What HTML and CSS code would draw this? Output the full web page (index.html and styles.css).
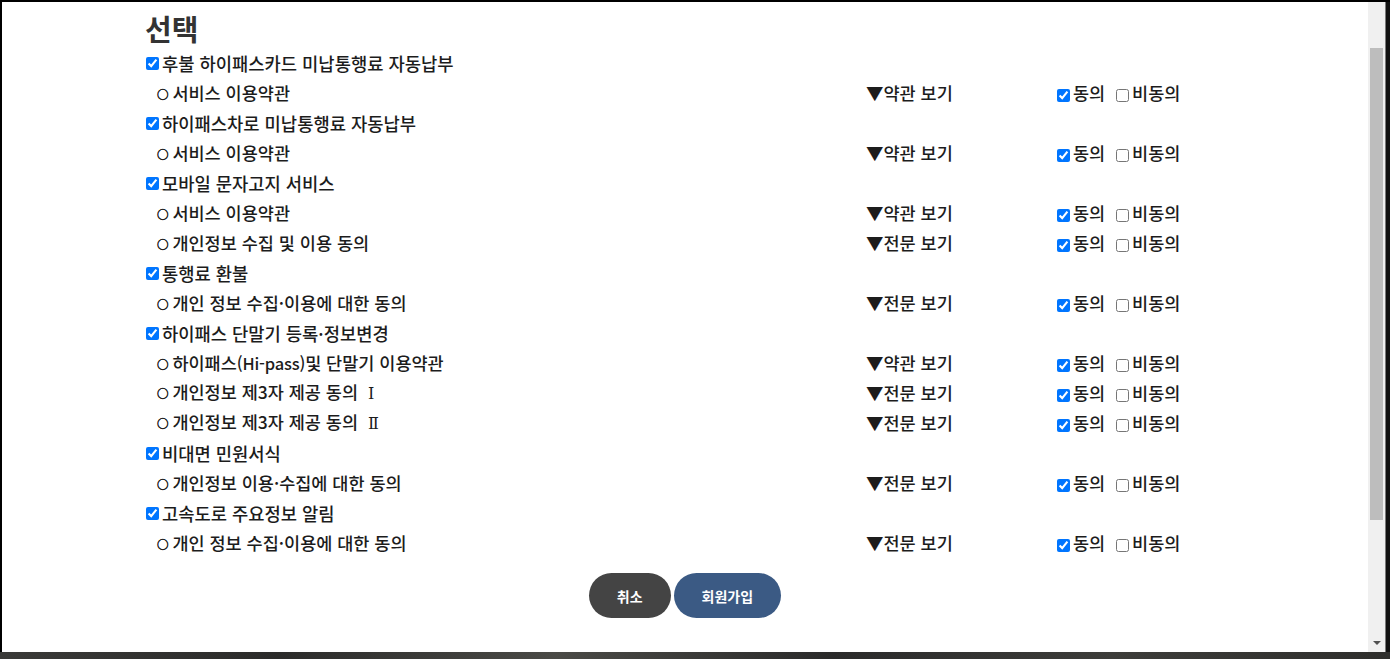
FILE: index.html
```html
<!DOCTYPE html>
<html lang="ko">
<head>
<meta charset="utf-8">
<title>선택 약관 동의</title>
<link rel="stylesheet" href="styles.css">
</head>
<body>
<div class="screen">
  <div class="window">
    <main class="page">
      <section class="terms">
        <h2 class="title">선택</h2>
        <div class="list">
          <div class="group"><label><input type="checkbox" checked>후불 하이패스카드 미납통행료 자동납부</label></div>
          <div class="item"><span class="name"><span class="bullet">○</span> 서비스 이용약관</span><span class="view">▼약관 보기</span><span class="agree"><input type="checkbox" checked>동의 <input class="no" type="checkbox">비동의</span></div>

          <div class="group"><label><input type="checkbox" checked>하이패스차로 미납통행료 자동납부</label></div>
          <div class="item"><span class="name"><span class="bullet">○</span> 서비스 이용약관</span><span class="view">▼약관 보기</span><span class="agree"><input type="checkbox" checked>동의 <input class="no" type="checkbox">비동의</span></div>

          <div class="group"><label><input type="checkbox" checked>모바일 문자고지 서비스</label></div>
          <div class="item"><span class="name"><span class="bullet">○</span> 서비스 이용약관</span><span class="view">▼약관 보기</span><span class="agree"><input type="checkbox" checked>동의 <input class="no" type="checkbox">비동의</span></div>
          <div class="item"><span class="name"><span class="bullet">○</span> 개인정보 수집 및 이용 동의</span><span class="view">▼전문 보기</span><span class="agree"><input type="checkbox" checked>동의 <input class="no" type="checkbox">비동의</span></div>

          <div class="group"><label><input type="checkbox" checked>통행료 환불</label></div>
          <div class="item"><span class="name"><span class="bullet">○</span> 개인 정보 수집·이용에 대한 동의</span><span class="view">▼전문 보기</span><span class="agree"><input type="checkbox" checked>동의 <input class="no" type="checkbox">비동의</span></div>

          <div class="group"><label><input type="checkbox" checked>하이패스 단말기 등록·정보변경</label></div>
          <div class="item"><span class="name"><span class="bullet">○</span> 하이패스<span class="latin">(Hi-pass)</span>및 단말기 이용약관</span><span class="view">▼약관 보기</span><span class="agree"><input type="checkbox" checked>동의 <input class="no" type="checkbox">비동의</span></div>
          <div class="item"><span class="name"><span class="bullet">○</span> 개인정보 제3자 제공 동의 <span class="roman">Ⅰ</span></span><span class="view">▼전문 보기</span><span class="agree"><input type="checkbox" checked>동의 <input class="no" type="checkbox">비동의</span></div>
          <div class="item"><span class="name"><span class="bullet">○</span> 개인정보 제3자 제공 동의 <span class="roman">Ⅱ</span></span><span class="view">▼전문 보기</span><span class="agree"><input type="checkbox" checked>동의 <input class="no" type="checkbox">비동의</span></div>

          <div class="group"><label><input type="checkbox" checked>비대면 민원서식</label></div>
          <div class="item"><span class="name"><span class="bullet">○</span> 개인정보 이용·수집에 대한 동의</span><span class="view">▼전문 보기</span><span class="agree"><input type="checkbox" checked>동의 <input class="no" type="checkbox">비동의</span></div>

          <div class="group"><label><input type="checkbox" checked>고속도로 주요정보 알림</label></div>
          <div class="item"><span class="name"><span class="bullet">○</span> 개인 정보 수집·이용에 대한 동의</span><span class="view">▼전문 보기</span><span class="agree"><input type="checkbox" checked>동의 <input class="no" type="checkbox">비동의</span></div>
        </div>
        <div class="actions">
          <button class="btn btn-cancel" type="button">취소</button>
          <button class="btn btn-join" type="button">회원가입</button>
        </div>
      </section>
    </main>
    <div class="scrollbar">
      <div class="thumb"></div>
      <div class="track-rest"></div>
      <div class="arrow-down"></div>
    </div>
    <div class="edge"></div>
  </div>
  <div class="taskbar"></div>
</div>
</body>
</html>
```

FILE: styles.css
```css
html, body {
  margin: 0;
  padding: 0;
}

body {
  width: 1390px;
  height: 659px;
  overflow: hidden;
  background: #1e1e1e;
  font-family: "Noto Sans CJK KR", "Noto Sans", sans-serif;
  color: #1c1c1c;
}

.screen {
  display: flex;
  flex-direction: column;
  height: 659px;
}

.window {
  display: flex;
  height: 652px;
  box-sizing: border-box;
  border-top: 2px solid #000;
  border-left: 2px solid #000;
  background: #fff;
}

.page {
  flex: 1;
  overflow: hidden;
  background: #fff;
}

.terms {
  padding-left: 140px;
}

.title {
  margin: 0 0 0 3px;
  padding-top: 6px;
  font-size: 29px;
  line-height: 40px;
  font-weight: 700;
  color: #333;
}

.list {
  display: flex;
  flex-direction: column;
}

.group,
.item {
  height: 30px;
  display: flex;
  align-items: center;
  font-size: 17.5px;
  font-weight: 500;
  line-height: 30px;
}

.group {
  font-size: 17.7px;
}

.group label {
  display: flex;
  align-items: center;
}

input[type="checkbox"] {
  width: 13px;
  height: 13px;
  margin: 3px 3px 3px 4px;
  vertical-align: -2px;
  accent-color: #0075ff;
}

input.no {
  margin-left: 6px;
}

.name {
  width: 724px;
  padding-left: 15px;
  box-sizing: border-box;
  white-space: nowrap;
}

.bullet {
  font-size: 11.5px;
  font-weight: 700;
  display: inline-block;
  vertical-align: 1px;
  margin-right: -1px;
  -webkit-text-stroke: 0.5px #1c1c1c;
}

.latin {
  font-size: 16.5px;
  letter-spacing: -0.2px;
}

.roman {
  font-family: "DejaVu Serif", "Liberation Serif", serif;
  font-weight: 400;
  font-size: 16px;
  margin-left: 5px;
}

.view {
  width: 187px;
  white-space: nowrap;
}

.agree {
  white-space: nowrap;
}

.actions {
  display: flex;
  justify-content: center;
  gap: 3px;
  margin-top: 15px;
  margin-left: -140px;
}

.btn {
  height: 45px;
  padding: 0 28px;
  border: 0;
  border-radius: 23px;
  font-family: "Noto Sans CJK KR", "Noto Sans", sans-serif;
  font-size: 14px;
  font-weight: 700;
  color: #fff;
}

.btn-cancel {
  background: #444444;
}

.btn-join {
  background: #3b5a84;
}

.scrollbar {
  width: 17px;
  background: #f0f0f0;
  display: flex;
  flex-direction: column;
  align-items: center;
  padding-top: 46px;
  box-sizing: border-box;
}

.thumb {
  width: 13px;
  height: 472px;
  background: #bdbdbd;
}

.track-rest {
  flex: 1;
}

.arrow-down {
  width: 0;
  height: 0;
  border-left: 4px solid transparent;
  border-right: 4px solid transparent;
  border-top: 4px solid #505050;
  margin-bottom: 7px;
}

.edge {
  width: 1px;
  background: #7a7a7a;
  border-right: 4px solid #111;
}

.taskbar {
  height: 7px;
  background: linear-gradient(90deg, #3a3a38 0%, #2b2b2a 20%, #4a4a46 40%, #2a2a2a 60%, #3d3d3a 80%, #2e2e2c 100%);
}
```
